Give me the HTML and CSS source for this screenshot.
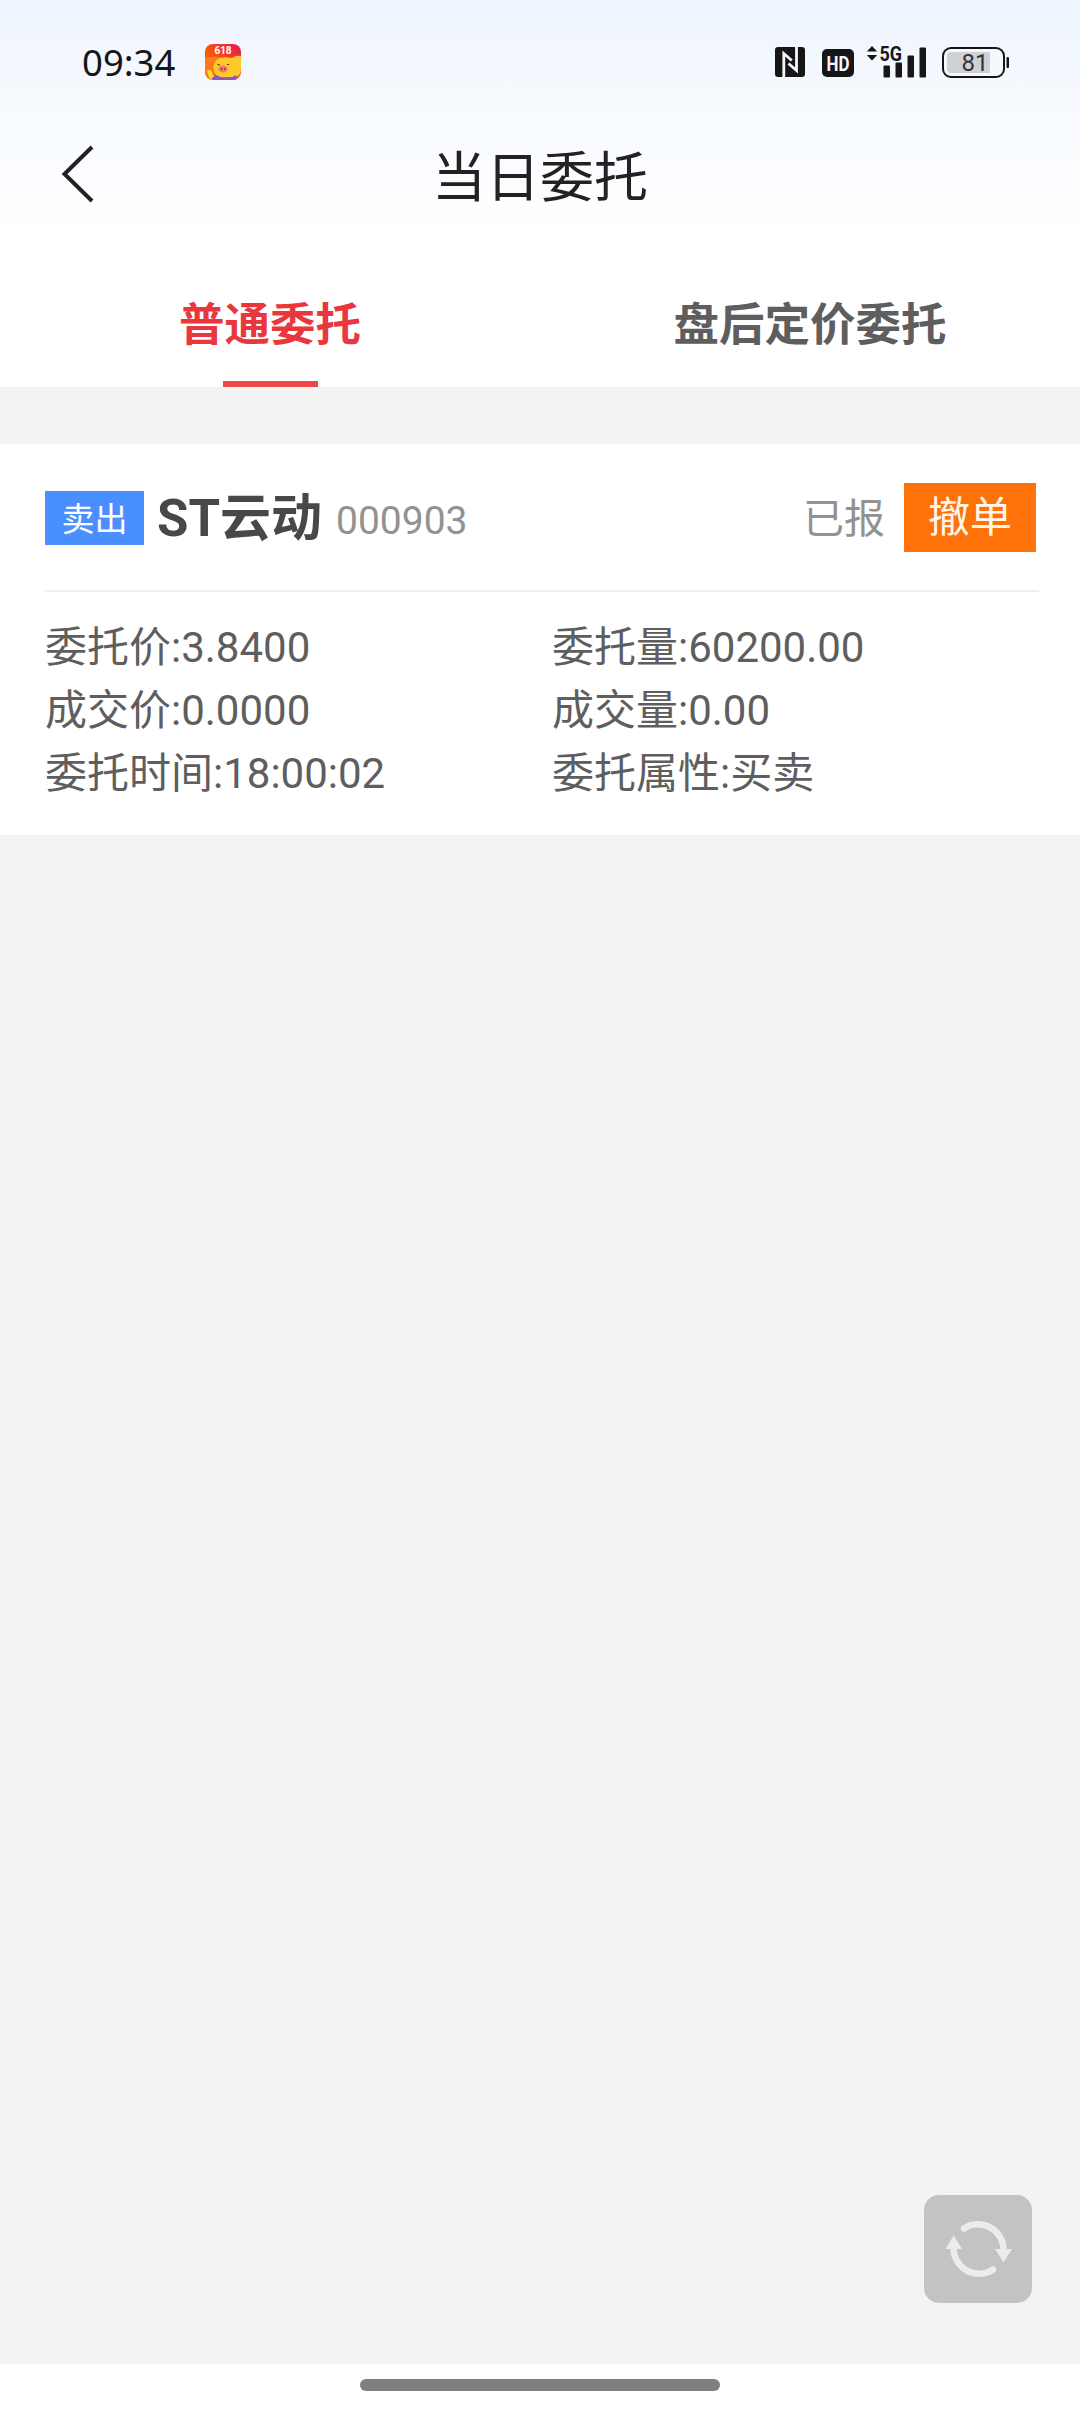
FILE: index.html
```
<!DOCTYPE html>
<html lang="zh-CN">
<head>
    <meta charset="UTF-8">
    <meta name="viewport" content="width=device-width, initial-scale=1.0">
    <title>当日委托</title>
    <link rel="stylesheet" href="styles.css">
</head>
<body>
    <div class="top">
        <div class="status-bar">
            <span class="time">09:34</span>
            <svg class="app-icon" width="36" height="36" viewBox="0 0 36 36">
                <defs>
                    <linearGradient id="appBg" x1="0" y1="1" x2="1" y2="0">
                        <stop offset="0" stop-color="#ff7a14"/>
                        <stop offset="0.5" stop-color="#f8500f"/>
                        <stop offset="1" stop-color="#e8105a"/>
                    </linearGradient>
                    <clipPath id="appClip"><rect width="36" height="36" rx="8"/></clipPath>
                </defs>
                <g clip-path="url(#appClip)">
                    <rect width="36" height="36" fill="url(#appBg)"/>
                    <path d="M0 14Q10 11 17 14L9 20Q6 28 10 36H0z" fill="#ff7a1c"/>
                    <path d="M36 12Q31 11 27 14Q12 11 9 20Q6 29 15 33H31Q36 31 36 25z" fill="#fccb2a"/>
                    <path d="M2 27Q6 24 8 31L11 35L6 36Q3 32 2 27z" fill="#ffd633"/>
                    <path d="M7 34Q11 30 15 33Q24 36 31 31L32 36H7z" fill="#8a55c8"/>
                    <ellipse cx="18" cy="25" rx="4.6" ry="3.6" fill="#f5796a"/>
                    <circle cx="16.500" cy="25" r="0.9" fill="#a02c20"/>
                    <circle cx="19.800" cy="25" r="0.9" fill="#a02c20"/>
                    <path d="M12.500 20.500l2.500 0.500M22 20.500h2" fill="none" stroke="#5a3210" stroke-width="1.200"/>
                    <text x="18" y="9.500" class="app-text">618</text>
                </g>
            </svg>
            <div class="status-icons">
                <svg width="30" height="30" viewBox="0 0 30 30">
                    <rect width="30" height="30" rx="3" fill="#161616"/>
                    <g fill="none" stroke="#f4f7fe" stroke-width="2.800">
                        <path d="M8.800 30V6.500L16.800 13.500"/>
                        <path d="M21.500 0V23.500L13.500 16.500"/>
                    </g>
                </svg>
                <svg class="hd" width="32" height="28" viewBox="0 0 32 28">
                    <rect width="32" height="28" rx="5" fill="#161616"/>
                    <text x="16" y="21.500" class="hd-text" textLength="23" lengthAdjust="spacingAndGlyphs">HD</text>
                </svg>
                <svg class="signal" width="61" height="36" viewBox="0 -4 61 36">
                    <path d="M6 0l5.200 5.500H0.800zM6 14.500l5.200-5.500H0.800z" fill="#161616"/>
                    <text x="13.500" y="14.500" class="net-text" textLength="22.500" lengthAdjust="spacingAndGlyphs">5G</text>
                    <rect x="17.500" y="19.500" width="6.500" height="12" rx="1" fill="#161616"/>
                    <rect x="29.500" y="16.500" width="6.500" height="15" rx="1" fill="#161616"/>
                    <rect x="41.500" y="9.500" width="6.500" height="22" rx="1" fill="#161616"/>
                    <rect x="53.500" y="1.500" width="6.500" height="30" rx="1" fill="#161616"/>
                </svg>
                <svg class="battery" width="68" height="31" viewBox="0 0 68 31">
                    <rect x="1" y="1" width="61" height="29" rx="8" fill="none" stroke="#161616" stroke-width="2"/>
                    <path d="M9 5H48V26H9Q5 26 5 22V9Q5 5 9 5z" fill="#cfd1d6"/>
                    <rect x="64.500" y="10" width="2.500" height="11" rx="1" fill="#161616"/>
                    <text x="33" y="24" class="battery-text">81</text>
                </svg>
            </div>
        </div>
        <div class="header">
            <svg class="back" width="36" height="60" viewBox="0 0 36 60">
                <path d="M32 3L4.500 30L32 57" fill="none" stroke="#222" stroke-width="4"/>
            </svg>
            <h1>当日委托</h1>
        </div>
    </div>
    <div class="tabs">
        <div class="tab active">普通委托</div>
        <div class="tab">盘后定价委托</div>
    </div>
    <div class="content">
        <div class="order">
            <div class="order-head">
                <span class="tag">卖出</span>
                <span class="name">ST云动</span>
                <span class="code">000903</span>
                <span class="state">已报</span>
                <button class="cancel">撤单</button>
            </div>
            <div class="order-info">
                <div>委托价:3.8400</div>
                <div>委托量:60200.00</div>
                <div>成交价:0.0000</div>
                <div>成交量:0.00</div>
                <div>委托时间:18:00:02</div>
                <div>委托属性:买卖</div>
            </div>
        </div>
        <div class="refresh">
            <svg width="108" height="108" viewBox="0 0 108 108">
                <g fill="none" stroke="#ececec" stroke-width="6.500" stroke-linecap="round">
                    <path d="M40 33.500A25.500 25.500 0 0 1 79.500 56"/>
                    <path d="M69 74.500A25.500 25.500 0 0 1 29.500 52"/>
                </g>
                <path d="M71 54H88L79.500 67.500zM21.500 54H38L29.700 40.500z" fill="#ececec"/>
            </svg>
        </div>
    </div>
    <div class="nav-bar"><div class="nav-handle"></div></div>
</body>
</html>
```
FILE: styles.css
```
* {
    box-sizing: border-box;
}
body {
    margin: 0;
    width: 1080px;
    height: 2412px;
    display: flex;
    flex-direction: column;
    background: #fff;
    font-family: Roboto, "Noto Sans CJK SC", sans-serif;
}
.top {
    height: 263px;
    background: linear-gradient(#eff5fe, #f8fbff 48%, #fff 92%);
}
.status-bar {
    height: 124px;
    padding: 0 70px 0 82px;
    display: flex;
    align-items: center;
}
.time {
    width: 123px;
    font-family: "Noto Sans", sans-serif;
    font-size: 36.500px;
    color: #161616;
}
.app-text {
    font-size: 10px;
    font-weight: bold;
    fill: #fff;
    text-anchor: middle;
}
.status-icons {
    margin-left: auto;
    display: flex;
    align-items: center;
}
.hd {
    margin: 2px 0 0 17px;
}
.hd-text {
    font-size: 21px;
    font-weight: bold;
    fill: #f4f7fe;
    text-anchor: middle;
}
.signal {
    margin: -4px 0 0 12px;
}
.net-text {
    font-size: 20px;
    font-weight: bold;
    fill: #161616;
}
.battery {
    margin: 1px 0 0 15px;
}
.battery-text {
    font-family: Roboto, sans-serif;
    font-size: 24px;
    fill: #333;
    text-anchor: middle;
}
.header {
    height: 100px;
    padding: 0 60px;
    display: flex;
    align-items: center;
}
.header h1 {
    flex: 1;
    margin: 0 36px 0 0;
    padding-top: 10px;
    font-size: 54px;
    font-weight: 400;
    line-height: 80px;
    text-align: center;
    color: #222;
}
.tabs {
    height: 124px;
    display: flex;
}
.tab {
    flex: 1;
    display: flex;
    flex-direction: column;
    align-items: center;
    justify-content: space-between;
    padding-top: 30px;
    font-size: 45.500px;
    font-weight: 700;
    line-height: 66px;
    color: #5e5e5e;
}
.tab.active {
    color: #e8383d;
}
.tab.active::after {
    content: "";
    width: 95px;
    height: 6px;
    background: #f04848;
}
.content {
    flex: 1;
    padding-top: 57px;
    display: flex;
    flex-direction: column;
    background: #f3f3f3;
}
.order {
    height: 391px;
    padding: 0 41px 0 45px;
    background: #fff;
}
.order-head {
    height: 148px;
    padding-right: 3px;
    border-bottom: 2px solid #f0f0f0;
    display: flex;
    align-items: center;
}
.tag {
    width: 99px;
    height: 54px;
    margin-top: 2px;
    font-size: 33px;
    line-height: 58px;
    text-align: center;
    color: #fff;
    background: #4a8fff;
}
.name {
    margin: 3px 0 0 13px;
    font-size: 51px;
    font-weight: 700;
    line-height: 74px;
    color: #484848;
}
.code {
    margin: 8px 0 0 14px;
    font-size: 39px;
    color: #929292;
}
.state {
    margin: -5px 0 0 auto;
    font-size: 41px;
    color: #929292;
}
.cancel {
    width: 132px;
    height: 69px;
    margin-left: 19px;
    padding: 2px 0 0;
    border: none;
    font: 42px/66px Roboto, "Noto Sans CJK SC", sans-serif;
    color: #fff6e8;
    background: #ff7109;
}
.order-info {
    padding-top: 24px;
    display: grid;
    grid-template-columns: 507px 1fr;
    font-size: 42px;
    line-height: 63px;
    color: #5e5e5e;
}
.refresh {
    align-self: flex-end;
    margin: auto 48px 61px 0;
    width: 108px;
    height: 108px;
    border-radius: 15px;
    background: #c3c3c3;
}
.nav-bar {
    height: 48px;
    padding-top: 15px;
    background: #fff;
}
.nav-handle {
    width: 360px;
    height: 12px;
    margin: 0 auto;
    border-radius: 6px;
    background: #808080;
}
```
